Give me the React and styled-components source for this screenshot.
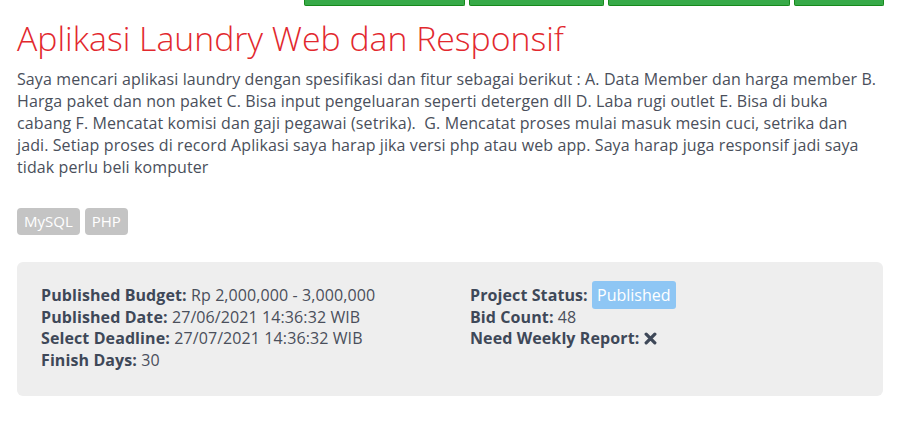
import React from 'react'
import styled, { createGlobalStyle } from 'styled-components'

const GlobalStyle = createGlobalStyle`
  body {
    margin: 0;
    background: #fff;
    font-family: "Open Sans", "Noto Sans", sans-serif;
    color: #4a4f5b;
  }
`

const Page = styled.div`
  padding: 0 14px 0 17px;
`

const ActionBar = styled.div`
  display: flex;
  justify-content: flex-end;
  gap: 4px;
  margin-right: -1px;
`

const ActionButton = styled.div`
  width: ${p => p.w}px;
  height: 5px;
  background: #37aa48;
  border: 1px solid #17891c;
  border-top: none;
  border-radius: 0 0 2px 2px;
`

const Title = styled.h1`
  margin: 12px 0 0;
  font-size: 33.8px;
  font-weight: 300;
  line-height: 40px;
  color: #e2282e;
`

const Description = styled.p`
  margin: 10px 0 0;
  font-size: 16px;
  line-height: 22px;
  letter-spacing: 0.1px;
  color: #4a4f5b;
`

const Tags = styled.div`
  display: flex;
  gap: 5px;
  margin-top: 30px;
`

const Tag = styled.span`
  padding: 3px 7px;
  font-size: 15px;
  line-height: 21px;
  color: #fff;
  background: #c4c4c4;
  border-radius: 4px;
`

const InfoBox = styled.div`
  display: grid;
  grid-template-columns: 1fr 1fr;
  column-gap: 40px;
  margin-top: 27px;
  padding: 23px 24px 25px;
  background: #eeeeee;
  border-radius: 6px;
`

const Column = styled.div`
  display: flex;
  flex-direction: column;
`

const Row = styled.div`
  font-size: 16px;
  line-height: 21.6px;
  letter-spacing: 0.1px;
  color: #4a4f5b;

  b {
    font-weight: 700;
    color: #3e4858;
  }
`

const StatusBadge = styled.span`
  padding: 3px 5px;
  font-size: 16px;
  letter-spacing: 0;
  color: #fff;
  background: #8ec6f4;
  border-radius: 3px;
`

const CrossIcon = () => (
  <svg width="13" height="13" viewBox="0 0 12 12" style={{ verticalAlign: '-1px' }}>
    <path d="M2 2 L10 10 M10 2 L2 10" stroke="#3e4858" strokeWidth="3" strokeLinecap="round" />
  </svg>
)

const App = () => {
  return (
    <Page>
      <GlobalStyle />
      <ActionBar>
        <ActionButton w={159} />
        <ActionButton w={133} />
        <ActionButton w={180} />
        <ActionButton w={88} />
      </ActionBar>
      <Title>Aplikasi Laundry Web dan Responsif</Title>
      <Description>
        Saya mencari aplikasi laundry dengan spesifikasi dan fitur sebagai berikut : A. Data Member dan harga member B. Harga paket dan non paket C. Bisa input pengeluaran seperti detergen dll D. Laba rugi outlet E. Bisa di buka cabang F. Mencatat komisi dan gaji pegawai (setrika).&nbsp; G. Mencatat proses mulai masuk mesin cuci, setrika dan jadi. Setiap proses di record Aplikasi saya harap jika versi php atau web app. Saya harap juga responsif jadi saya tidak perlu beli komputer
      </Description>
      <Tags>
        <Tag>MySQL</Tag>
        <Tag>PHP</Tag>
      </Tags>
      <InfoBox>
        <Column>
          <Row><b>Published Budget:</b> Rp 2,000,000 - 3,000,000</Row>
          <Row><b>Published Date:</b> 27/06/2021 14:36:32 WIB</Row>
          <Row><b>Select Deadline:</b> 27/07/2021 14:36:32 WIB</Row>
          <Row><b>Finish Days:</b> 30</Row>
        </Column>
        <Column>
          <Row><b>Project Status:</b> <StatusBadge>Published</StatusBadge></Row>
          <Row><b>Bid Count:</b> 48</Row>
          <Row><b>Need Weekly Report:</b> <CrossIcon /></Row>
        </Column>
      </InfoBox>
    </Page>
  )
}

export default App
